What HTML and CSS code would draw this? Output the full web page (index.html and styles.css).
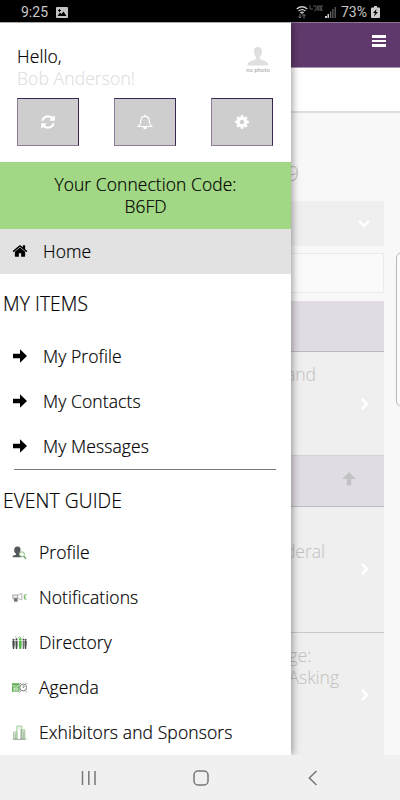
FILE: index.html
```html
<!DOCTYPE html>
<html lang="en">
<head>
<meta charset="utf-8">
<title>Event menu</title>
<link rel="stylesheet" href="styles.css">
</head>
<body>
<div class="phone">
  <header class="status">
    <span class="time">9:25</span>
    <svg class="pic" viewBox="0 0 12 11"><path fill="#c4c4c4" fill-rule="evenodd" d="M1 0h10q1 0 1 1v9q0 1-1 1H1q-1 0-1-1V1q0-1 1-1zM1.500 9h9L7.500 4.500 5.500 7 4 5.500zM3 2v1H2v1h1v1h1V4h1V3H4V2z"/></svg>
    <span class="grow"></span>
    <svg class="wifi" viewBox="0 0 12 13"><g fill="none" stroke="#ccc" stroke-width="1.300"><path d="M.7 3q5.300-4.500 10.600 0M2.500 5q3.500-2.800 7 0M4.200 6.800q1.800-1.200 3.600 0"/></g><path fill="#ccc" d="M5 7.200h2L6 8.800z"/><path stroke="#777" fill="none" d="M4 8v4M2.500 10.500L4 12l1.500-1.500M8 12.500v-4M6.500 10L8 8.500 9.500 10"/></svg>
    <svg class="lte" viewBox="0 0 15 8"><path fill="none" stroke="#555" d="M1 0v4h3M4 1h3v4l-2 1M8 1h6M8 3h5M8 5h6M9 1v4M12 1v5"/></svg>
    <svg class="signal" viewBox="0 0 11 11"><path fill="#ccc" d="M0 9h2v2H0zM2.500 7h1.500v4H2.500z"/><path fill="#666" d="M5 4.500h1.300V11H5zM7.300 2h1.200v9H7.300zM9.600 0h1.200v11H9.600z"/></svg>
    <span class="pct">73%</span>
    <svg class="battery" viewBox="0 0 9 12"><path fill="#ccc" fill-rule="evenodd" d="M3 0h3v1.500h2q1 0 1 1V11q0 1-1 1H1q-1 0-1-1V2.500q0-1 1-1h2zM5.500 3L2 7h2l-1 3.500L7 6H5z"/></svg>
  </header>

  <main class="screen">
    <div class="page">
      <div class="appbar"><i></i><i></i><i></i></div>
      <div class="subbar"></div>
      <div class="content">
        <div class="date">9</div>
        <div class="select"><svg viewBox="0 0 14 10"><path d="M2 2l5 5 5-5"/></svg></div>
        <div class="search"></div>
        <div class="band first"></div>
        <div class="row r1"><p>and</p><svg viewBox="0 0 9 14"><path d="M2 2l5 5-5 5"/></svg></div>
        <div class="band second"><svg viewBox="0 0 14 14"><path d="M7 0l7 7H9.200v6.500H4.800V7H0z"/></svg></div>
        <div class="row r2"><p>deral</p><svg viewBox="0 0 9 14"><path d="M2 2l5 5-5 5"/></svg></div>
        <div class="row r3"><p>ge:<br>Asking</p><svg viewBox="0 0 9 14"><path d="M2 2l5 5-5 5"/></svg></div>
      </div>
      <div class="edge"></div>
    </div>

    <nav class="drawer">
      <div class="greeting">
        <div class="hello">Hello,<br><span>Bob Anderson!</span></div>
        <div class="nophoto">
          <svg viewBox="0 0 22 19"><path d="M11 0c3 0 4.300 2 4.100 4.500-.1 2.500-1.300 4.500-2.100 5.500v2c2 1.500 8.500 1.500 8.500 6.500H.5c0-5 6.500-5 8.500-6.500v-2C8.200 9 7 7 6.900 4.500 6.700 2 8 0 11 0z"/></svg>
          <span>no photo</span>
        </div>
      </div>
      <div class="buttons">
        <div class="btn"><svg viewBox="0 0 1792 1792"><path d="M1639 1056q0 5-1 7-64 268-268 434.500t-478 166.500q-146 0-282.500-55t-243.500-157l-129 129q-19 19-45 19t-45-19-19-45v-448q0-26 19-45t45-19h448q26 0 45 19t19 45-19 45l-137 137q71 66 161 102t187 36q134 0 250-65t186-179q11-17 53-117 8-23 30-23h192q13 0 22.500 9.500t9.500 22.500zm25-800v448q0 26-19 45t-45 19h-448q-26 0-45-19t-19-45 19-45l138-138q-148-137-349-137-134 0-250 65t-186 179q-11 17-53 117-8 23-30 23h-199q-13 0-22.500-9.500t-9.500-22.500v-7q65-268 270-434.500t480-166.500q146 0 284 55.500t245 156.500l130-129q19-19 45-19t45 19 19 45z"/></svg></div>
        <div class="btn"><svg viewBox="0 0 16 16"><path class="line" d="M1.300 12.500C3 11 3.800 9.500 3.800 6.500 3.800 4 5.500 2.300 8 2.300S12.200 4 12.200 6.500c0 3 .8 4.500 2.500 6zM8 2.300V.5"/><path d="M6 13h4q-.2 2.300-2 2.300T6 13z"/></svg></div>
        <div class="btn"><svg viewBox="0 0 1792 1792"><path d="M1152 896q0-106-75-181t-181-75-181 75-75 181 75 181 181 75 181-75 75-181zm512-109v222q0 12-8 23t-20 13l-185 28q-19 54-39 91 35 50 107 138 10 12 10 25t-9 23q-27 37-99 108t-94 71q-12 0-26-9l-138-108q-44 23-91 38-16 136-29 186-7 28-36 28h-222q-14 0-24.500-8.500t-11.500-21.500l-28-184q-49-16-90-37l-141 107q-10 9-25 9-14 0-25-11-126-114-165-168-7-10-7-23 0-12 8-23 15-21 51-66.500t54-70.500q-27-50-41-99l-183-27q-13-2-21-12.500t-8-23.500v-222q0-12 8-23t19-13l186-28q14-46 39-92-40-57-107-138-10-12-10-24 0-10 9-23 26-36 98.500-107.500t94.500-71.500q13 0 26 10l138 107q44-23 91-38 16-136 29-186 7-28 36-28h222q14 0 24.500 8.500t11.500 21.500l28 184q49 16 90 37l142-107q9-9 24-9 13 0 25 10 129 119 165 170 7 8 7 22 0 12-8 23-15 21-51 66.500t-54 70.500q26 50 41 98l183 28q13 2 21 12.500t8 23.500z"/></svg></div>
      </div>
      <div class="code">Your Connection Code:<br>B6FD</div>
      <div class="item home"><svg viewBox="0 0 1792 1792"><path d="M1472 992v480q0 26-19 45t-45 19h-384v-384h-256v384h-384q-26 0-45-19t-19-45v-480q0-1 .5-3t.5-3l575-474 575 474q1 2 1 6zm223-69l-62 74q-8 9-21 11h-3q-13 0-21-7l-692-577-692 577q-12 8-24 7-13-2-21-11l-62-74q-8-10-7-23.500t11-21.500l719-599q32-26 76-26t76 26l244 204v-195q0-14 9-23t23-9h192q14 0 23 9t9 23v408l219 182q10 8 11 21.500t-7 23.500z"/></svg><span>Home</span></div>
      <h2>MY ITEMS</h2>
      <div class="item"><svg viewBox="0 0 14 14"><path d="M7 .3L14 7 7 13.700V9.300H0V4.700h7z"/></svg><span>My Profile</span></div>
      <div class="item"><svg viewBox="0 0 14 14"><path d="M7 .3L14 7 7 13.700V9.300H0V4.700h7z"/></svg><span>My Contacts</span></div>
      <div class="item"><svg viewBox="0 0 14 14"><path d="M7 .3L14 7 7 13.700V9.300H0V4.700h7z"/></svg><span>My Messages</span></div>
      <div class="rule"></div>
      <h2 class="t-guide">EVENT GUIDE</h2>
      <div class="item guide"><svg viewBox="0 0 14 14"><path fill="#56585c" d="M5 1.500c2.300 0 3.200 1.500 3 3.500S6.800 7.500 6.500 8.200V9L9 10v1.500H.7V10L3.800 9v-.8C2.500 7.500 2 6.500 2 5s.7-3.500 3-3.500z"/><circle cx="9.300" cy="8.700" r="2.300" fill="#fff" stroke="#83ba75" stroke-width=".9"/><path stroke="#70a963" stroke-width="1.300" d="M11 10.500l2 2.300"/></svg><span>Profile</span></div>
      <div class="item guide"><svg viewBox="0 0 14 14"><path fill="#eee" stroke="#999" stroke-width=".8" d="M.7 4.700h4.500v3H.7z"/><path fill="#777" d="M1.500 7.700h3.800V11H2z"/><path fill="none" stroke="#aaa" stroke-width=".8" d="M5.200 4.700l4-1.400v5.900l-4-1.500"/><path fill="none" stroke="#78ba66" d="M13.500 4l-2 1v3l2 1M12 6.500h1"/></svg><span>Notifications</span></div>
      <div class="item guide"><svg viewBox="0 0 14 14"><g fill="#454b48"><circle cx="1.400" cy="4.500" r="1"/><circle cx="4.200" cy="4" r="1"/><circle cx="12.600" cy="4.500" r="1"/><circle cx="10.600" cy="4" r=".8"/><path d="M.3 5.700h2.200v3.500L2 13H.8L.4 9.300zM3.200 5.300h2v4.500L4.900 13H3.600l-.3-3.500zM11.600 5.700h2.200l-.2 3.600-.4 3.700H12l-.4-3.800zM9.900 5.200H11V13h-.9z"/></g><g fill="#52b648"><circle cx="7.700" cy="4" r="1.100"/><path d="M6.400 5.400H9v4L8.700 13H6.800l-.4-3.600z"/></g><path fill="none" stroke="#87bb80" stroke-width=".9" d="M3 2l1-1M5.500 2.800L7 1.500l1.500 1.300M10 1l1 1"/></svg><span>Directory</span></div>
      <div class="item guide"><svg viewBox="0 0 14 14"><path fill="#5eae54" d="M0 3h7v8H0z"/><path fill="none" stroke="#d7edd3" stroke-width=".8" d="M0 5.500h7M1 7.700h5M1 9.300h5M2.500 6v5M4.700 6v5"/><circle cx="10.500" cy="7" r="3.200" fill="#fff" stroke="#777" stroke-width=".9"/><path fill="none" stroke="#777" stroke-width=".8" d="M7.300 3.500l1.200-.8M12.500 2.700l1.200.8M10.500 5v2.200L12 6M8 10.500l-.6 1M13 10.500l.6 1"/></svg><span>Agenda</span></div>
      <div class="item guide"><svg viewBox="0 0 14 14"><g fill="#e8f3e6" stroke="#a0cd9b" stroke-width=".9"><path d="M1.500 6.500h3V13h-3zM4.500 1h4.700v12H4.500zM9.200 4.500H12V13H9.200z"/></g><path fill="none" stroke="#999" stroke-width=".8" d="M3 8v5M8.500 4v9M11 6v7M.5 13.300h13"/><path fill="#fff" d="M5.500 4h2v9h-2z"/></svg><span>Exhibitors and Sponsors</span></div>
    </nav>
  </main>

  <footer class="softkeys">
    <svg viewBox="0 0 16 16"><path d="M1.500 1v14M7.800 1v14M14 1v14"/></svg>
    <svg viewBox="0 0 16 16"><rect x="1" y="1" width="14" height="14" rx="4"/></svg>
    <svg viewBox="0 0 16 16"><path d="M11.500 1L4.300 8l7.200 7"/></svg>
  </footer>
</div>
</body>
</html>
```
FILE: styles.css
```css
* { box-sizing: border-box; }
body { margin: 0; font-family: "Open Sans", "Noto Sans", sans-serif; font-weight: 300; color: #000; }
svg { display: block; flex: none; }
p, h2 { margin: 0; }
.phone { width: 400px; height: 800px; display: flex; flex-direction: column; overflow: hidden; background: #f8f8f8; }

.status { height: 22px; flex: none; background: #000; display: flex; align-items: center; padding: 2px 20px 0 21px; font: 14px/20px Roboto, sans-serif; color: #c8c8c8; }
.time { width: 35px; }
.pic { width: 12px; height: 11px; }
.grow { flex: 1; }
.wifi { width: 12px; height: 13px; }
.lte { width: 15px; height: 8px; margin: 0 1px 6px 1px; }
.signal { width: 11px; height: 11px; margin-right: 5px; }
.pct { width: 30px; }
.battery { width: 9px; height: 12px; }

.screen { position: relative; flex: 1; min-height: 0; overflow: hidden; }
.page { height: 100%; background: #f8f8f8; position: relative; }
.appbar { height: 46px; background: #5f396b; border-bottom: 1px solid #a793ae; border-top: 1px solid #8b7592; padding: 12px 14px 0 0; display: flex; flex-direction: column; align-items: flex-end; gap: 2px; }
.appbar i { width: 14px; height: 2.500px; background: #fff; }
.subbar { height: 45px; background: #fff; border-bottom: 2px solid #dedede; }
.content { width: 384px; text-align: right; color: #c0c0c0; font-size: 17.500px; line-height: 22px; }
.date { height: 88px; padding: 49px 85px 0 0; font-size: 20px; line-height: 24px; }
.select { height: 45px; background: #efefef; display: flex; justify-content: flex-end; align-items: center; padding-right: 13px; }
.select svg { width: 14px; height: 10px; }
.select path, .row path { fill: none; stroke: #fff; stroke-width: 2.500; }
.search { height: 40px; margin: 7px 0 8px; border: 1px solid #ebebeb; background: #fafafa; }
.band { background: #e1dce3; border-bottom: 1px solid #bdb9c0; display: flex; justify-content: flex-end; }
.first { height: 51px; }
.second { height: 52px; border-top: 1px solid #d4d1d6; padding: 16px 28px 0 0; }
.second svg { width: 14px; height: 14px; fill: #c2c2c4; }
.row { background: #efefef; display: flex; justify-content: flex-end; align-items: flex-start; }
.row svg { width: 9px; height: 14px; }
.r1 { height: 103px; padding: 11px 15px 0 0; }
.r1 p { margin-right: 44px; }
.r1 svg { margin-top: 34px; }
.r2 { height: 126px; padding: 33px 15px 0 0; border-bottom: 1px solid #c9c9c9; }
.r2 p { margin-right: 35px; }
.r2 svg { margin-top: 22px; }
.r3 { height: 130px; padding: 11px 15px 0 0; }
.r3 p { margin-right: 21px; text-align: left; }
.r3 svg { margin-top: 44px; }
.edge { position: absolute; left: 396px; top: 230px; width: 12px; height: 155px; border: 1px solid #b8b8b8; border-radius: 6px; background: #fbfbfb; }

.drawer { position: absolute; left: 0; top: 0; width: 291px; height: 100%; background: #fff; border-top: 1px solid #aaa; box-shadow: 1px 0 8px rgba(0,0,0,.42); font-size: 17.500px; letter-spacing: .1px; -webkit-text-stroke: .2px currentColor; }
.greeting { height: 75px; display: flex; justify-content: space-between; padding: 22px 21px 0 17px; line-height: 22px; }
.hello span { color: #dfdfdf; }
.nophoto { width: 24px; display: flex; flex-direction: column; align-items: center; font: 5.800px/6px Roboto, sans-serif; color: #bbb; padding-top: 2px; }
.nophoto svg { width: 22px; height: 19px; fill: #dfdfdf; }
.nophoto span { margin-top: 1px; white-space: nowrap; }
.buttons { display: flex; justify-content: space-between; padding: 0 18px 0 17px; height: 64px; }
.btn { width: 62px; height: 48px; background: #cecece; border: 1px solid #3a2750; border-left-color: #8e7b99; border-bottom-color: #8e7b99; display: flex; align-items: center; justify-content: center; }
.btn svg { width: 16px; height: 16px; fill: #fff; }
.btn .line { fill: none; stroke: #fff; stroke-width: 1.200; }
.code { height: 67px; background: #a2d885; text-align: center; padding-top: 11px; line-height: 22px; font-size: 17.400px; }
.item { height: 45px; display: flex; align-items: center; padding: 0 0 1px 13px; }
.item svg { width: 14px; height: 14px; margin-right: 16px; }
.home { background: #e2e2e2; }
.home svg { width: 16px; height: 16px; margin: 0 15px 0 -1px; }
h2 { font-size: 19.200px; font-weight: 300; line-height: 24px; padding: 18px 0 0 3px; height: 60px; }
.rule { width: 262px; height: 1px; margin: 0 0 0 14.400px; background: #777; }
.t-guide { padding-top: 19px; height: 60px; }
.guide svg { width: 15px; height: 15px; margin: 0 12px 0 -1px; }

.softkeys { height: 45px; flex: none; background: #f0f0f0; display: flex; justify-content: space-between; align-items: center; padding: 1px 79px 0 81px; }
.softkeys svg { width: 16px; height: 16px; fill: none; stroke: #777; stroke-width: 1.500; }
```
